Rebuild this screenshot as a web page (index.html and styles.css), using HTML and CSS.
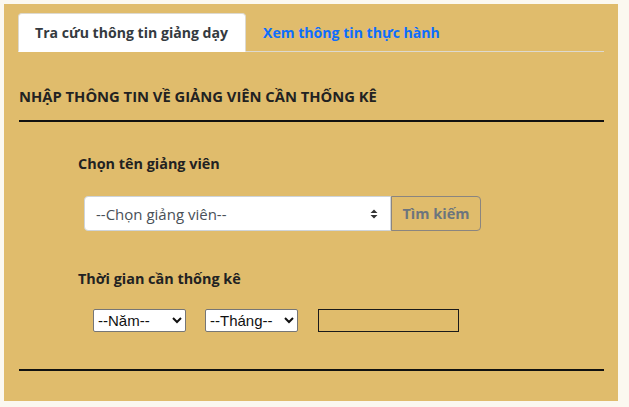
FILE: index.html
```html
<!DOCTYPE html>
<html lang="vi">
<head>
<meta charset="utf-8">
<title>Thống kê giảng dạy</title>
<link rel="stylesheet" href="styles.css">
</head>
<body>
<div class="panel">
  <ul class="tabs">
    <li class="tab active">Tra cứu thông tin giảng dạy</li>
    <li class="tab">Xem thông tin thực hành</li>
  </ul>
  <h2 class="title">NHẬP THÔNG TIN VỀ GIẢNG VIÊN CẦN THỐNG KÊ</h2>
  <hr class="rule">
  <div class="form">
    <div class="label">Chọn tên giảng viên</div>
    <div class="search-row">
      <div class="fake-select">
        <span>--Chọn giảng viên--</span>
        <svg class="updown" width="8" height="10" viewBox="0 0 8 10"><path d="M4 0.5 L7.5 4 H0.5 Z M4 9.5 L7.5 6 H0.5 Z" fill="#333"/></svg>
      </div>
      <button class="btn">Tìm kiếm</button>
    </div>
    <div class="label label2">Thời gian cần thống kê</div>
    <div class="time-row">
      <select class="sel sel-year"><option>--Năm--</option></select>
      <select class="sel sel-month"><option>--Tháng--</option></select>
      <input class="box" type="text">
    </div>
  </div>
  <hr class="rule rule-bottom">
</div>
</body>
</html>
```
FILE: styles.css
```css
* { box-sizing: border-box; }
html, body { margin: 0; }
body {
  background: #fbf8f0;
  padding: 4px 11px 6px 4px;
  font-family: "Open Sans", "Noto Sans", sans-serif;
  color: #212529;
}
.panel {
  background: #e0bc6c;
  height: 397px;
  padding: 9px 14px 0 14px;
}
.tabs {
  list-style: none;
  margin: 0;
  padding: 0;
  display: flex;
  border-bottom: 1px solid #ddd9cf;
}
.tab {
  font-size: 14.1px;
  font-weight: 700;
  color: #0d6efd;
  padding: 0 17px 0 17px;
  height: 39px;
  line-height: 39px;
  margin-bottom: -1px;
  white-space: nowrap;
}
.tab.active {
  background: #fff;
  color: #343a40;
  border: 1px solid #ddd9cf;
  border-bottom-color: #fff;
  border-radius: 4px 4px 0 0;
  width: 228px;
  padding-left: 16px;
  line-height: 37px;
}
.title {
  margin: 33px 0 0 1px;
  font-size: 14.75px;
  font-weight: 700;
  line-height: 22px;
  color: #222;
  letter-spacing: 0;
}
.rule {
  border: 0;
  height: 2px;
  background: #111;
  margin: 13px 0 0 1px;
}
.form { padding-left: 60px; }
.label {
  font-size: 14.4px;
  font-weight: 700;
  color: #222;
  margin-top: 32px;
  line-height: 20px;
}
.search-row {
  display: flex;
  margin-top: 22px;
  margin-left: 6px;
}
.fake-select {
  width: 307px;
  height: 35px;
  background: #fff;
  border: 1px solid #ced4da;
  border-radius: 4px 0 0 4px;
  display: flex;
  align-items: center;
  justify-content: space-between;
  padding: 0 12px 0 11px;
  font-size: 15px;
  color: #495057;
}
.updown { display: block; }
.btn {
  width: 90px;
  height: 35px;
  background: transparent;
  border: 1px solid #8a8580;
  border-radius: 0 4px 4px 0;
  color: #6c757d;
  font-family: "Open Sans", "Noto Sans", sans-serif;
  font-size: 14.5px;
  font-weight: 700;
  padding: 0;
}
.label2 { margin-top: 38px; }
.time-row {
  display: flex;
  align-items: center;
  margin-top: 20px;
  margin-left: 15px;
  gap: 19px;
}
.sel {
  height: 23px;
  font-family: "Liberation Sans", Arial, sans-serif;
  font-size: 15px;
  background: #fff;
  color: #111;
  border: 1px solid #767676;
  border-radius: 2px;
}
.sel-year { width: 93px; }
.sel-month { width: 93px; }
.box {
  width: 141px;
  height: 23px;
  border: 1px solid #1a1a1a;
  background: transparent;
  margin-left: 1px;
}
.rule-bottom { margin-top: 37px; }
```
